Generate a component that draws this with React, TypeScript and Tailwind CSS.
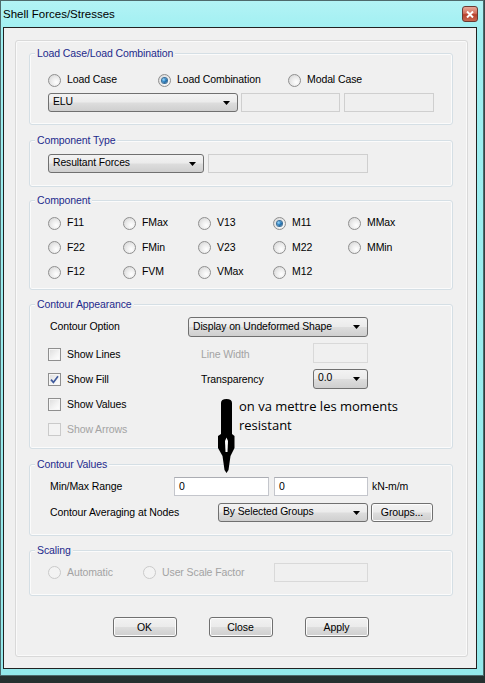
import React from 'react';

const FONT = "font-['Liberation_Sans',Arial,sans-serif]";

function Radio({ checked = false, disabled = false }: { checked?: boolean; disabled?: boolean }) {
  return (
    <span
      className={
        disabled
          ? 'flex h-[13px] w-[13px] shrink-0 items-center justify-center rounded-full border border-[#cacaca] bg-[#f3f3f3]'
          : 'flex h-[13px] w-[13px] shrink-0 items-center justify-center rounded-full border border-[#8f8f8f] bg-[radial-gradient(circle_at_65%_65%,#ffffff_0%,#ececec_45%,#d0d0d0_100%)]'
      }
    >
      {checked && (
        <span className="h-[5px] w-[5px] rounded-full bg-[radial-gradient(circle_at_35%_35%,#9edcff_0%,#2a7fc0_45%,#0e3e6c_100%)] shadow-[0_0_0_1px_#3b6f99]" />
      )}
    </span>
  );
}

function Check({ checked = false, disabled = false }: { checked?: boolean; disabled?: boolean }) {
  return (
    <span
      className={
        disabled
          ? 'flex h-[13px] w-[13px] shrink-0 items-center justify-center border border-[#cacaca] bg-[#f3f3f3]'
          : 'flex h-[13px] w-[13px] shrink-0 items-center justify-center border border-[#8f8f8f] bg-[linear-gradient(135deg,#dcdcdc_0%,#f4f4f4_60%,#ffffff_100%)] shadow-[inset_0_0_0_1px_#f6f6f6]'
      }
    >
      {checked && (
        <svg width="9" height="9" viewBox="0 0 9 9">
          <path d="M1 4.6 L3.4 7.4 L8 1.2" fill="none" stroke="#3f5a9c" strokeWidth="1.7" />
        </svg>
      )}
    </span>
  );
}

function Combo({ text, className }: { text: string; className: string }) {
  return (
    <div
      className={`flex h-[19px] shrink-0 items-center justify-between rounded-[3px] border border-[#707070] bg-[linear-gradient(to_bottom,#f3f3f3_0%,#ebebeb_48%,#dddddd_52%,#cfcfcf_100%)] pl-[4px] pr-[7px] text-[10.4px] ${className}`}
    >
      <span className="leading-none">{text}</span>
      <svg width="7" height="4" viewBox="0 0 7 4">
        <path d="M0 0H7L3.5 4Z" fill="#000" />
      </svg>
    </div>
  );
}

function Box({ className, value = '' }: { className: string; value?: string }) {
  return (
    <div className={`flex shrink-0 items-center pl-[4px] leading-none ${className}`}>{value}</div>
  );
}

function Btn({ text, className }: { text: string; className: string }) {
  return (
    <div
      className={`flex shrink-0 items-center justify-center rounded-[3px] border border-[#707070] bg-[linear-gradient(to_bottom,#f2f2f2_0%,#ebebeb_48%,#dddddd_52%,#cfcfcf_100%)] leading-none shadow-[inset_0_0_0_1px_#fcfcfc] ${className}`}
    >
      {text}
    </div>
  );
}

function Group({ title, className, children }: { title: string; className: string; children?: React.ReactNode }) {
  return (
    <div className={`ml-[13px] w-[424px] shrink-0 rounded-[3px] border border-[#d5dfe5] shadow-[inset_0_0_0_1px_#fbfbfb] ${className}`}>
      <div className="-mt-[8px] ml-[5px] h-[14px] w-fit bg-[#f0f0f0] px-[2px] leading-[14px] text-[#1d2a8c]">{title}</div>
      {children}
    </div>
  );
}

function RadioItem({ label, checked, disabled, className }: { label: string; checked?: boolean; disabled?: boolean; className: string }) {
  return (
    <div className={`flex items-center gap-[6px] ${className}`}>
      <Radio checked={checked} disabled={disabled} />
      <span className={disabled ? 'text-[#a3a3a3]' : ''}>{label}</span>
    </div>
  );
}

function CheckItem({ label, checked, disabled }: { label: string; checked?: boolean; disabled?: boolean }) {
  return (
    <div className="flex w-[153px] shrink-0 items-center gap-[6px]">
      <Check checked={checked} disabled={disabled} />
      <span className={disabled ? 'text-[#a3a3a3]' : ''}>{label}</span>
    </div>
  );
}

export default function App() {
  const comps: [string, boolean][][] = [
    [['F11', false], ['FMax', false], ['V13', false], ['M11', true], ['MMax', false]],
    [['F22', false], ['FMin', false], ['V23', false], ['M22', false], ['MMin', false]],
    [['F12', false], ['FVM', false], ['VMax', false], ['M12', false]],
  ];
  return (
    <div className={`relative h-[683px] w-[485px] overflow-hidden bg-[linear-gradient(to_bottom,#3a4a4c,#25302f)] text-[10.5px] tracking-[-0.1px] text-black ${FONT}`}>
      {/* window */}
      <div className="h-[676px] w-[484px] border border-[#4e6a6c] bg-[linear-gradient(to_bottom,#b2f3f5_0%,#9eeff1_5%,#94e9eb_100%)]">
        {/* title bar */}
        <div className="flex h-[26px] items-center justify-between pl-[2px] pr-[5px]">
          <span className="pt-[1px] text-[11.5px] tracking-normal">Shell Forces/Stresses</span>
          <span className="flex h-[16px] w-[16px] items-center justify-center rounded-[3px] border border-[#6b3a33] bg-[linear-gradient(to_bottom,#e7a898_0%,#d2705d_45%,#b7412c_55%,#c96a52_100%)]">
            <svg width="8" height="7" viewBox="0 0 8 7">
              <path d="M1 0.5 L7 6.5 M7 0.5 L1 6.5" stroke="#ffffff" strokeWidth="2" />
            </svg>
          </span>
        </div>
        {/* client */}
        <div className="ml-[2px] h-[642px] w-[474px] border border-[#222] bg-[#f0f0f0] pt-[12px]">
          <div className="ml-[11px] flex h-[617px] w-[453px] flex-col rounded-[3px] border border-[#d9d9d9] shadow-[inset_0_0_0_1px_#fafafa]">
            {/* Load case */}
            <Group title="Load Case/Load Combination" className="mt-[12px] h-[72px]">
              <div className="mt-[13px] flex h-[14px] items-center pl-[18px]">
                <RadioItem label="Load Case" className="w-[110px]" />
                <RadioItem label="Load Combination" checked className="w-[130px]" />
                <RadioItem label="Modal Case" className="w-[120px]" />
              </div>
              <div className="mt-[6px] flex items-center pl-[18px]">
                <Combo text="ELU" className="w-[190px]" />
                <Box className="ml-[3px] h-[19px] w-[99px] border border-[#cfcfcf] bg-[#efefef]" />
                <Box className="ml-[4px] h-[19px] w-[90px] border border-[#cfcfcf] bg-[#efefef]" />
              </div>
            </Group>

            {/* Component type */}
            <Group title="Component Type" className="mt-[15px] h-[47px]">
              <div className="mt-[7px] flex items-center pl-[18px]">
                <Combo text="Resultant Forces" className="w-[156px]" />
                <Box className="ml-[4px] h-[19px] w-[160px] border border-[#cfcfcf] bg-[#efefef]" />
              </div>
            </Group>

            {/* Component */}
            <Group title="Component" className="mt-[13px] h-[90px]">
              <div className="mt-[4px] flex flex-col pl-[18px]">
                {comps.map((row, i) => (
                  <div key={i} className="flex h-[24.5px] items-center">
                    {row.map(([l, c]) => (
                      <RadioItem key={l} label={l} checked={c} className="w-[75px]" />
                    ))}
                  </div>
                ))}
              </div>
            </Group>

            {/* Contour appearance */}
            <Group title="Contour Appearance" className="mt-[14px] h-[145px]">
              <div className="mt-[6px] flex h-[20px] items-center pl-[20px]">
                <span className="w-[138px] shrink-0">Contour Option</span>
                <Combo text="Display on Undeformed Shape" className="h-[20px] w-[180px]" />
              </div>
              <div className="mt-[5px] flex flex-col pl-[18px]">
                <div className="flex h-[25px] items-center">
                  <CheckItem label="Show Lines" />
                  <span className="w-[112px] shrink-0 text-[#a3a3a3]">Line Width</span>
                  <Box className="-mt-[4px] h-[20px] w-[55px] border border-[#d9d9d9] bg-[#f0f0f0]" />
                </div>
                <div className="flex h-[25px] items-center">
                  <CheckItem label="Show Fill" checked />
                  <span className="w-[112px] shrink-0">Transparency</span>
                  <Combo text="0.0" className="-mt-[2px] h-[20px] w-[55px]" />
                </div>
                <div className="flex h-[25px] items-center">
                  <CheckItem label="Show Values" />
                </div>
                <div className="flex h-[25px] items-center">
                  <CheckItem label="Show Arrows" disabled />
                </div>
              </div>
            </Group>

            {/* Contour values */}
            <Group title="Contour Values" className="mt-[15px] h-[72px]">
              <div className="mt-[6px] flex h-[19px] items-center pl-[20px]">
                <span className="w-[124px] shrink-0">Min/Max Range</span>
                <Box value="0" className="h-[19px] w-[95px] border border-[#c4c6cc] border-t-[#abadb3] bg-white" />
                <Box value="0" className="ml-[5px] h-[19px] w-[94px] border border-[#c4c6cc] border-t-[#abadb3] bg-white" />
                <span className="ml-[4px]">kN-m/m</span>
              </div>
              <div className="mt-[7px] flex h-[19px] items-center pl-[20px]">
                <span className="w-[168px] shrink-0">Contour Averaging at Nodes</span>
                <Combo text="By Selected Groups" className="w-[150px]" />
                <Btn text="Groups..." className="ml-[3px] h-[19px] w-[62px]" />
              </div>
            </Group>

            {/* Scaling */}
            <Group title="Scaling" className="mt-[14px] h-[46px]">
              <div className="mt-[6px] flex h-[19px] items-center pl-[18px]">
                <RadioItem label="Automatic" disabled className="w-[95px]" />
                <RadioItem label="User Scale Factor" disabled className="w-[131px]" />
                <Box className="h-[19px] w-[94px] border border-[#d9d9d9] bg-[#f0f0f0]" />
              </div>
            </Group>

            <div className="mt-[21px] flex justify-center gap-[32px] pr-[2px]">
              <Btn text="OK" className="h-[20px] w-[64px]" />
              <Btn text="Close" className="h-[20px] w-[64px]" />
              <Btn text="Apply" className="h-[20px] w-[64px]" />
            </div>
          </div>
        </div>
      </div>

      {/* hand-drawn annotation over the dialog */}
      <svg className="absolute left-[214px] top-[396px]" width="24" height="80" viewBox="0 0 24 80">
        <path d="M7 7 Q7 3 12.5 3 Q18 3 18 7 L18 38 L20.5 40 L20.5 52 L16.5 60 L14.5 74 L12.5 77 L10.5 74 L8.5 60 L4 52 L4 40 L7 38 Z" fill="#000" />
        <path d="M11 45 L12.5 41.5 L14 45 L13.5 56 L11.5 56 Z" fill="#fff" />
      </svg>
      <div className="absolute left-[239px] top-[397px] font-['Open_Sans',sans-serif] text-[13px] leading-[19px] tracking-normal text-black">
        on va mettre les moments
        <br />
        resistant
      </div>
    </div>
  );
}
